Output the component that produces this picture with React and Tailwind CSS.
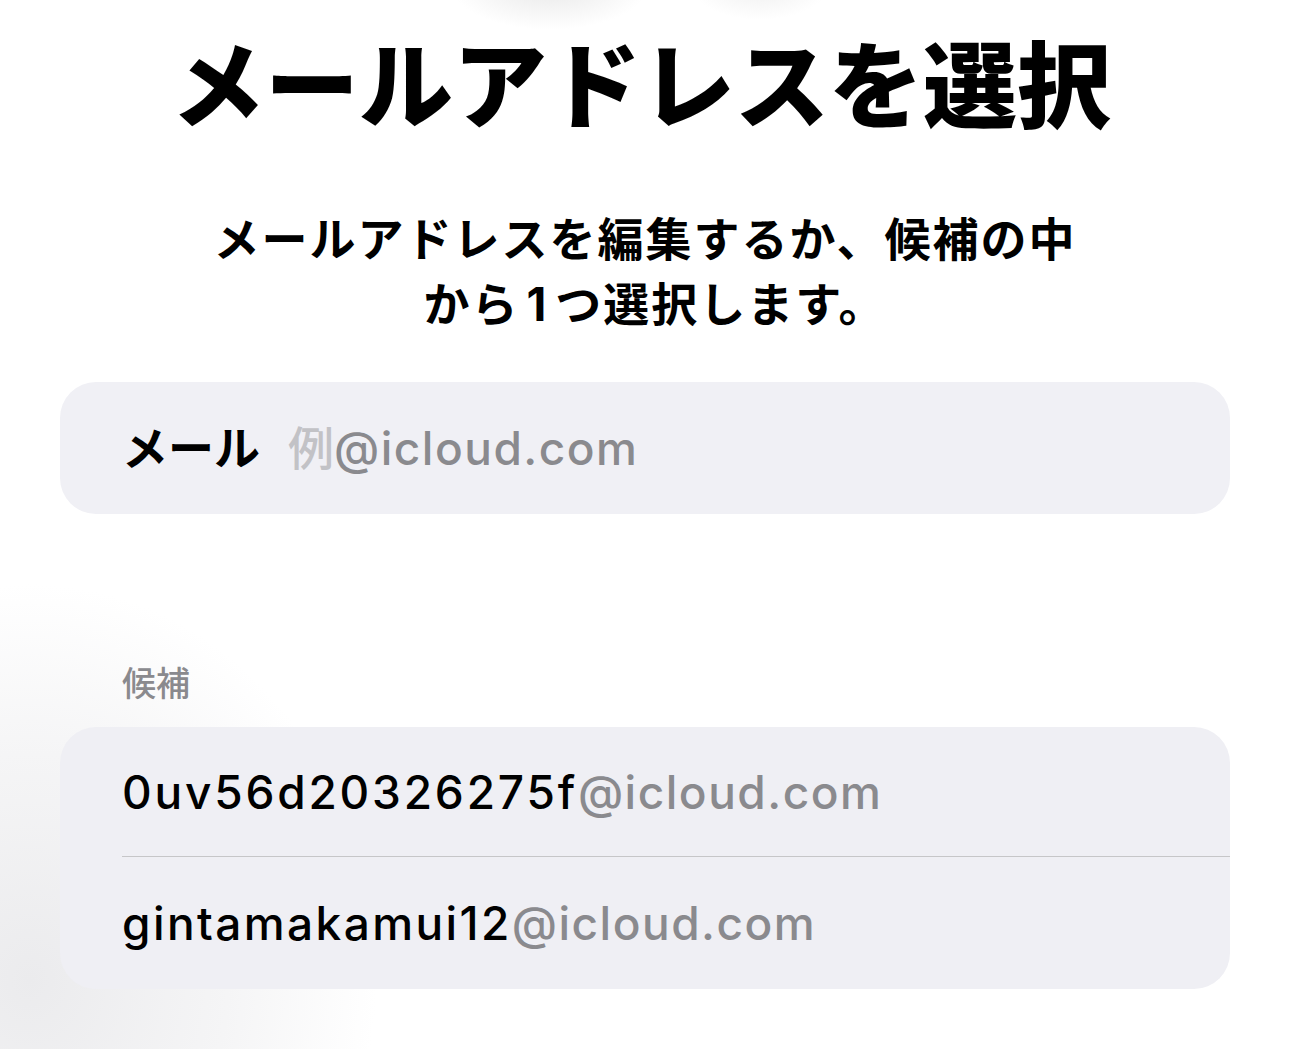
export default function App() {
  const font = { fontFamily: '"Inter", "Noto Sans CJK JP", sans-serif' };
  return (
    <div
      className="relative w-[1290px] h-[1049px] overflow-hidden bg-white"
      style={font}
    >
      {/* ambient background shading */}
      <div className="pointer-events-none absolute left-[-320px] top-[580px] w-[700px] h-[800px] rounded-full bg-[radial-gradient(ellipse_at_center,#ebebed_0%,#f5f5f6_40%,rgba(255,255,255,0)_70%)]" />
      <div className="pointer-events-none absolute left-[450px] top-[-60px] w-[200px] h-[90px] rounded-full bg-[radial-gradient(ellipse_at_center,#e8e8e8_0%,rgba(255,255,255,0)_70%)]" />
      <div className="pointer-events-none absolute left-[690px] top-[-50px] w-[140px] h-[70px] rounded-full bg-[radial-gradient(ellipse_at_center,#efefef_0%,rgba(255,255,255,0)_70%)]" />

      <div className="relative flex flex-col px-[60px]">
        <h1 className="mt-[32px] pr-[8px] text-center text-[94px] leading-[110px] font-black text-black">
          メールアドレスを選択
        </h1>
        <p className="mt-[65px] flex flex-col items-center text-[46px] leading-[65px] font-bold text-black tracking-[2px]">
          <span>メールアドレスを編集するか、候補の中</span>
          <span className="ml-[20px]">
            から<span className="mx-[7px]">1</span>つ選択します。
          </span>
        </p>

        <div className="mt-[45px] h-[132px] rounded-[36px] bg-[#f0f0f5] flex items-center pl-[62px]">
          <span className="text-[46px] font-bold text-black leading-none">メール</span>
          <span className="ml-[28px] text-[46px] leading-none text-[#8a8a8e] font-medium tracking-[1.5px]">
            <span className="text-[#c2c2c6] tracking-normal">例</span>@icloud.com
          </span>
        </div>

        <div className="mt-[150px] pl-[62px] text-[34px] leading-[40px] text-[#8a8a8e] font-medium">
          候補
        </div>

        <div className="mt-[23px] rounded-[36px] bg-[#efeff4] flex flex-col pl-[62px]">
          <div className="h-[130px] flex items-center border-b border-[#c6c6c8] text-[46px] leading-none font-medium">
            <span className="text-black tracking-[2.8px]">0uv56d20326275f</span>
            <span className="text-[#8a8a8e] tracking-[1.5px]">@icloud.com</span>
          </div>
          <div className="h-[132px] flex items-center text-[46px] leading-none font-medium">
            <span className="text-black tracking-[2.4px]">gintamakamui12</span>
            <span className="text-[#8a8a8e] tracking-[1.5px]">@icloud.com</span>
          </div>
        </div>
      </div>
    </div>
  );
}
